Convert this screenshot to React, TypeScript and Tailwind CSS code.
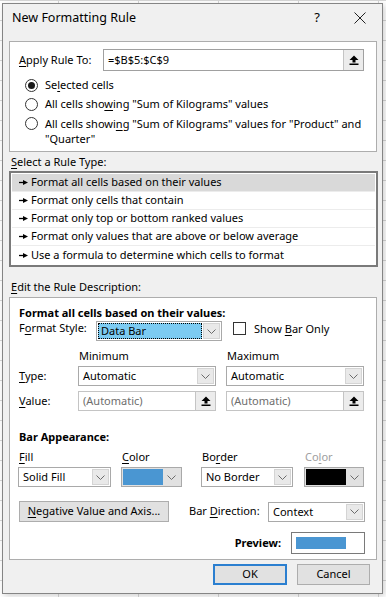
import React from 'react';

function U({ children }: { children: React.ReactNode }) {
  return <span className="underline underline-offset-[2px] decoration-[1px]">{children}</span>;
}

function Chevron() {
  return (
    <svg width="9" height="5" viewBox="0 0 9 5">
      <path d="M0.5 0.5 L4.5 4.5 L8.5 0.5" fill="none" stroke="#6b6b6b" strokeWidth="1" />
    </svg>
  );
}

function UpArrow() {
  return (
    <svg width="10" height="10" viewBox="0 0 10 10">
      <path d="M5 0.5 L9.5 5 H6.5 V7.5 H3.5 V5 H0.5 Z" fill="#000" />
      <rect x="0.5" y="8.5" width="9" height="1.5" fill="#000" />
    </svg>
  );
}

function RuleArrow() {
  return (
    <svg width="9" height="5" viewBox="0 0 9 5" className="shrink-0">
      <path d="M0 2.5 H5" stroke="#000" strokeWidth="1.3" />
      <path d="M4 0 L9 2.5 L4 5 Z" fill="#000" />
    </svg>
  );
}

function Select({
  className,
  children,
}: {
  className: string;
  children: React.ReactNode;
}) {
  return (
    <div className={`flex h-[20px] items-center border border-[#a9a9a9] bg-white ${className}`}>
      <div className="flex-1 truncate pl-[4px] leading-[18px]">{children}</div>
      <div className="mr-[1px] flex h-[16px] w-[17px] items-center justify-center border border-[#d4d4d4] bg-[#e9e9e9]">
        <Chevron />
      </div>
    </div>
  );
}

function RefInput({ className, value, muted }: { className: string; value: string; muted?: boolean }) {
  return (
    <div
      className={`flex items-center border bg-white ${muted ? 'border-[#c4c4c4] text-[#6d6d6d]' : 'border-[#a0a0a0] text-black'} ${className}`}
    >
      <div className="flex-1 pl-[4px]">{value}</div>
      <div className="flex h-full w-[20px] items-center justify-center border-l border-[#c4c4c4] bg-[#ececec]">
        <UpArrow />
      </div>
    </div>
  );
}

function Radio({ checked }: { checked?: boolean }) {
  return (
    <div className="flex h-[13px] w-[13px] shrink-0 items-center justify-center rounded-full border border-[#333] bg-white">
      {checked && <div className="h-[7px] w-[7px] rounded-full bg-[#1a1a1a]" />}
    </div>
  );
}

const ruleTypes = [
  'Format all cells based on their values',
  'Format only cells that contain',
  'Format only top or bottom ranked values',
  'Format only values that are above or below average',
  'Use a formula to determine which cells to format',
];

export default function App() {
  return (
    <div className="h-[597px] w-[386px] overflow-hidden bg-white bg-[linear-gradient(#d6d6d6_1px,transparent_1px),linear-gradient(90deg,#d6d6d6_1px,transparent_1px)] bg-[size:80px_20px] bg-[position:58px_0px] pl-[2px] pt-[3px] font-['Noto_Sans',sans-serif] text-[11px] text-black">
      <div className="h-[591px] w-[381px] border border-[#858585] bg-[#f0f0f0] shadow-[2px_2px_6px_rgba(0,0,0,0.18)]">
        {/* title bar */}
        <div className="flex h-[28px] items-center pl-[9px] pr-[16px]">
          <div className="flex-1 text-[12.5px]">New Formatting Rule</div>
          <div className="mr-[34px] text-[13px]">?</div>
          <svg width="12" height="12" viewBox="0 0 12 12">
            <path d="M0.5 0.5 L11.5 11.5 M11.5 0.5 L0.5 11.5" stroke="#222" strokeWidth="1" />
          </svg>
        </div>

        {/* apply rule to */}
        <div className="ml-[6px] mt-[9px] h-[111px] w-[368px] border border-[#adadad] bg-white">
          <div className="mt-[7px] flex items-center">
            <div className="w-[93px] pl-[9px]">
              <U>A</U>pply Rule To:
            </div>
            <RefInput className="h-[22px] w-[261px]" value="=$B$5:$C$9" />
          </div>
          <div className="ml-[15px] mt-[7px] flex flex-col gap-[5px] leading-[14px]">
            <div className="flex items-center gap-[7px]">
              <Radio checked />
              <div>
                Se<U>l</U>ected cells
              </div>
            </div>
            <div className="flex items-center gap-[7px]">
              <Radio />
              <div>
                All cells sho<U>w</U>ing "Sum of Kilograms" values
              </div>
            </div>
            <div className="flex items-start gap-[7px]">
              <div className="pt-[1px]">
                <Radio />
              </div>
              <div className="leading-[15px]">
                All cells showi<U>n</U>g "Sum of Kilograms" values for "Product" and
                <br />
                "Quarter"
              </div>
            </div>
          </div>
        </div>

        {/* rule type */}
        <div className="h-[19px] pl-[8px] leading-[19px]">
          <U>S</U>elect a Rule Type:
        </div>
        <div className="ml-[6px] h-[96px] w-[369px] border-2 border-[#7a7a7a] bg-white p-[1px]">
          {ruleTypes.map((t, i) => (
            <div
              key={t}
              className={`flex h-[18px] items-center gap-[3px] pl-[7px] ${i === 0 ? 'bg-[#d9d9d9]' : ''} ${i < 4 ? 'border-b border-[#ececec]' : ''}`}
            >
              <RuleArrow />
              <span>{t}</span>
            </div>
          ))}
        </div>

        {/* description */}
        <div className="mt-[11px] h-[19px] pl-[8px] leading-[18px]">
          <U>E</U>dit the Rule Description:
        </div>
        <div className="ml-[6px] h-[263px] w-[368px] border border-[#adadad] bg-white pl-[9px]">
          <div className="mt-[7px] font-bold leading-[16px]">Format all cells based on their values:</div>

          <div className="flex items-start">
            <div className="w-[77px] leading-[14px]">
              F<U>o</U>rmat Style:
            </div>
            <div className="flex h-[20px] w-[126px] items-center border border-[#a9a9a9] bg-white">
              <div className="ml-[1px] h-[16px] flex-1 border border-dotted border-black bg-[#7ccbf2] pl-[2px] leading-[14px]">
                Data Bar
              </div>
              <div className="ml-[1px] mr-[1px] flex h-[16px] w-[17px] items-center justify-center border border-[#d4d4d4] bg-[#e9e9e9]">
                <Chevron />
              </div>
            </div>
            <div className="ml-[11px] mt-[1px] h-[13px] w-[13px] border border-[#333] bg-white" />
            <div className="ml-[8px] leading-[15px]">
              Show <U>B</U>ar Only
            </div>
          </div>

          <div className="mt-[8px] flex leading-[14px]">
            <div className="w-[60px]" />
            <div className="w-[148px]">Minimum</div>
            <div>Maximum</div>
          </div>

          <div className="mt-[3px] flex items-center">
            <div className="w-[59px]">
              <U>T</U>ype:
            </div>
            <Select className="w-[138px]">Automatic</Select>
            <Select className="ml-[10px] w-[138px]">Automatic</Select>
          </div>

          <div className="mt-[5px] flex items-center">
            <div className="w-[59px]">
              <U>V</U>alue:
            </div>
            <RefInput className="h-[20px] w-[138px]" value="(Automatic)" muted />
            <RefInput className="ml-[10px] h-[20px] w-[138px]" value="(Automatic)" muted />
          </div>

          <div className="mt-[19px] font-bold leading-[14px]">Bar Appearance:</div>

          <div className="-ml-[1px] mt-[6px] flex leading-[14px]">
            <div className="w-[93px] pl-[1px]">
              <U>F</U>ill
            </div>
            <div className="ml-[10px] w-[61px] pl-[1px]">
              <U>C</U>olor
            </div>
            <div className="ml-[19px] w-[92px] pl-[1px]">
              Bo<U>r</U>der
            </div>
            <div className="ml-[11px] w-[60px] pl-[1px] text-[#a0a0a0]">
              Co<U>l</U>or
            </div>
          </div>

          <div className="-ml-[1px] mt-[3px] flex">
            <Select className="w-[93px]">Solid Fill</Select>
            <div className="ml-[10px] flex h-[20px] w-[61px] items-center border border-[#a9a9a9] bg-[#e1e1e1] p-[1px]">
              <div className="h-full w-[40px] bg-[#4a96d2]" />
              <div className="flex flex-1 items-center justify-center">
                <Chevron />
              </div>
            </div>
            <Select className="ml-[19px] w-[92px]">No Border</Select>
            <div className="ml-[11px] flex h-[20px] w-[60px] items-center border border-[#a9a9a9] bg-[#e1e1e1] p-[1px]">
              <div className="h-full w-[40px] bg-black" />
              <div className="flex flex-1 items-center justify-center">
                <Chevron />
              </div>
            </div>
          </div>

          <div className="mt-[14px] flex items-center">
            <div className="flex h-[21px] w-[150px] items-center justify-center border border-[#adadad] bg-[#e1e1e1]">
              <span>
                <U>N</U>egative Value and Axis...
              </span>
            </div>
            <div className="ml-[20px] w-[79px]">
              Bar <U>D</U>irection:
            </div>
            <Select className="w-[97px]">Context</Select>
          </div>

          <div className="mt-[10px] flex items-center justify-end pr-[11px]">
            <div className="mr-[10px] font-bold">Preview:</div>
            <div className="h-[22px] w-[74px] border border-[#7a7a7a] bg-white p-[4px]">
              <div className="h-[12px] w-[50px] bg-[#4a96d2]" />
            </div>
          </div>
        </div>

        {/* buttons */}
        <div className="mt-[4px] flex justify-end gap-[10px] pr-[12px]">
          <div className="flex h-[21px] w-[74px] items-center justify-center border-2 border-[#2b7fd0] bg-[#e1e1e1]">
            OK
          </div>
          <div className="flex h-[21px] w-[73px] items-center justify-center border border-[#adadad] bg-[#e1e1e1]">
            Cancel
          </div>
        </div>
      </div>
    </div>
  );
}
